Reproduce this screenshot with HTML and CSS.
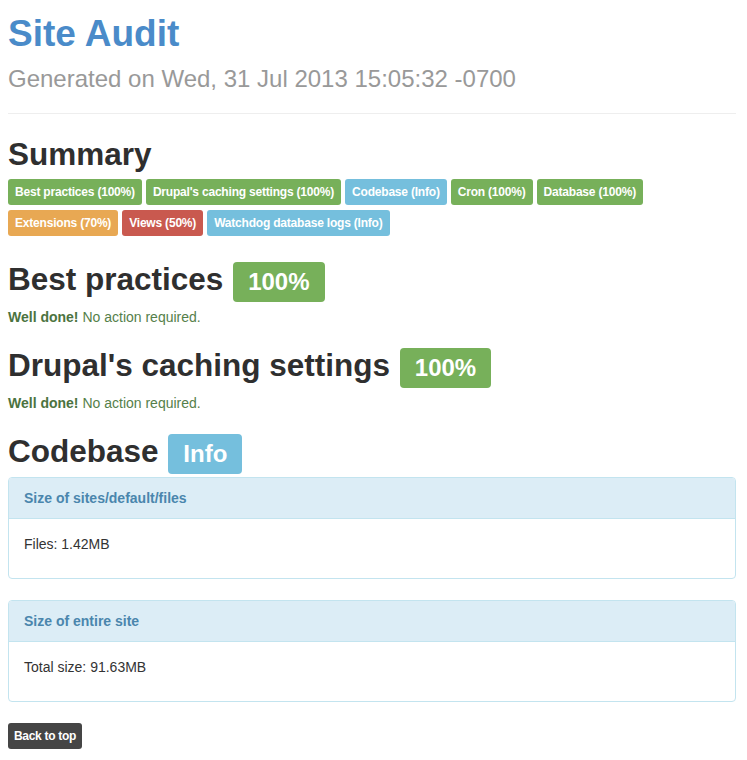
FILE: index.html
```html
<!DOCTYPE html>
<html lang="en">
<head>
    <meta charset="UTF-8">
    <meta name="viewport" content="width=device-width, initial-scale=1.0">
    <title>Site Audit</title>
    <link rel="stylesheet" href="styles.css">
</head>
<body>
    <div class="page" id="top">
        <h1 class="title">Site Audit</h1>
        <p class="generated">Generated on Wed, 31 Jul 2013 15:05:32 -0700</p>
        <hr>

        <h2 class="summary-title">Summary</h2>
        <div class="summary">
            <a class="label label-success" href="#best-practices">Best practices (100%)</a>
            <a class="label label-success" href="#caching">Drupal's caching settings (100%)</a>
            <a class="label label-info" href="#codebase">Codebase (Info)</a>
            <a class="label label-success" href="#cron">Cron (100%)</a>
            <a class="label label-success" href="#database">Database (100%)</a>
            <a class="label label-warning" href="#extensions">Extensions (70%)</a>
            <a class="label label-danger" href="#views">Views (50%)</a>
            <a class="label label-info" href="#watchdog">Watchdog database logs (Info)</a>
        </div>

        <h2 id="best-practices">Best practices <span class="label label-lg label-success">100%</span></h2>
        <p class="text-success"><strong>Well done!</strong> No action required.</p>

        <h2 id="caching">Drupal's caching settings <span class="label label-lg label-success">100%</span></h2>
        <p class="text-success"><strong>Well done!</strong> No action required.</p>

        <h2 id="codebase">Codebase <span class="label label-lg label-info">Info</span></h2>
        <div class="panel">
            <div class="panel-heading">Size of sites/default/files</div>
            <div class="panel-body">
                <p>Files: 1.42MB</p>
            </div>
        </div>
        <div class="panel">
            <div class="panel-heading">Size of entire site</div>
            <div class="panel-body">
                <p>Total size: 91.63MB</p>
            </div>
        </div>

        <a class="back-top" href="#top">Back to top</a>
    </div>
</body>
</html>
```

FILE: styles.css
```css
body {
    margin: 0;
    background-color: #fff;
    color: #333;
    font-family: "Liberation Sans", Helvetica, Arial, sans-serif;
    font-size: 14px;
    line-height: 20px;
}
.page {
    padding: 0 11px 20px 8px;
}
.title {
    margin: 14px 0 0;
    font-size: 37px;
    line-height: 40px;
    font-weight: bold;
    color: #4a8bc9;
}
.generated {
    margin: 11px 0 0;
    font-size: 24px;
    line-height: 28px;
    color: #999;
}
hr {
    margin: 20px 0 0;
    border: 0;
    border-top: 1px solid #eee;
}
h2 {
    margin: 21px 0 5px;
    font-size: 31.5px;
    line-height: 34px;
    font-weight: bold;
    color: #2f2f2f;
}
.summary-title {
    margin-top: 23px;
}
.summary {
    display: flex;
    flex-wrap: wrap;
    padding-top: 3px;
}
.label {
    display: inline-block;
    padding: 7px;
    margin: 0 4px 5px 0;
    font-size: 12px;
    line-height: 12px;
    font-weight: bold;
    letter-spacing: -0.2px;
    color: #fff;
    text-decoration: none;
    border-radius: 3px;
}
.label-lg {
    margin: 0 0 0 1px;
    padding: 8px 15px;
    font-size: 24px;
    line-height: 24px;
    letter-spacing: 0;
    border-radius: 4px;
    vertical-align: baseline;
}
.label-success {
    background-color: #77b05a;
}
.label-info {
    background-color: #75bfdd;
}
.label-warning {
    background-color: #e8a853;
}
.label-danger {
    background-color: #c9594f;
}
.text-success {
    margin: 0;
    color: #55804a;
}
.text-success strong {
    color: #4b7340;
}
.panel {
    margin-bottom: 21px;
    border: 1px solid #c3e4ef;
    border-radius: 4px;
    background-color: #fff;
}
h2 + .panel {
    margin-top: -2px;
}
.panel-heading {
    padding: 10px 15px;
    background-color: #dcedf6;
    border-bottom: 1px solid #c3e4ef;
    border-radius: 3px 3px 0 0;
    color: #4a86ad;
    font-weight: bold;
}
.panel-body {
    padding: 15px 15px 14px;
}
.panel-body p {
    margin: 0 0 10px;
}
.back-top {
    display: inline-block;
    padding: 7px 6px;
    font-size: 12px;
    line-height: 12px;
    font-weight: bold;
    letter-spacing: -0.3px;
    color: #fff;
    background-color: #454545;
    border-radius: 3px;
    text-decoration: none;
}
```
